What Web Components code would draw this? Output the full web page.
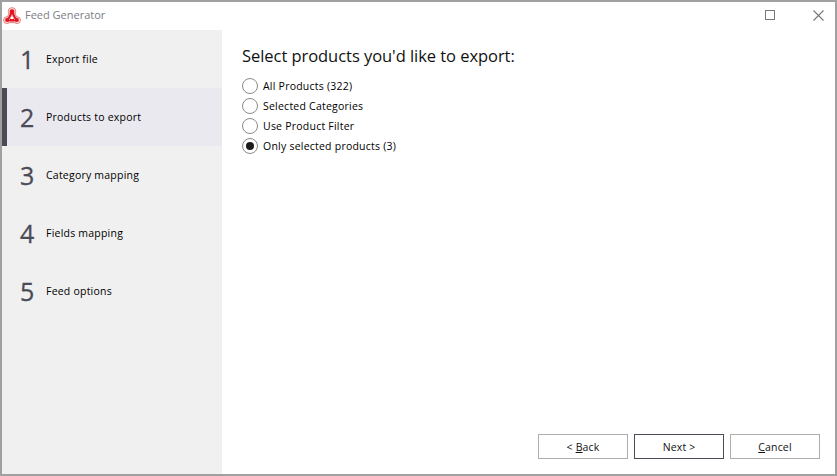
<!DOCTYPE html>
<html>
<head>
<meta charset="utf-8">
<title>Feed Generator</title>
<style>
  html, body { margin: 0; padding: 0; height: 100%; background: #fff; }
  body { font-family: "Open Sans", "Noto Sans", sans-serif; }
</style>
</head>
<body>
<template id="window-tpl">
  <style>
    :host { display: flex; flex-direction: column; box-sizing: border-box; width: 837px; height: 476px; border: 2px solid #a0a0a0; background: #fff; }
    .body { flex: 1; display: flex; min-height: 0; }
    .side { width: 220px; background: #f0f0f0; display: flex; flex-direction: column; }
    .main { flex: 1; display: flex; flex-direction: column; min-width: 0; }
  </style>
  <slot name="title"></slot>
  <div class="body">
    <div class="side"><slot name="side"></slot></div>
    <div class="main"><slot></slot></div>
  </div>
</template>

<template id="title-tpl">
  <style>
    :host { display: flex; align-items: center; height: 28px; background: #fff; color: #7d7d85; font-size: 11px; }
    .logo { width: 18px; height: 18px; margin-left: 1px; margin-right: 4px; flex: none; }
    .text { flex: 1; margin-bottom: 4px; }
    .btn { width: 46px; height: 28px; display: flex; align-items: center; justify-content: center; margin-top: -2px; }
    .btn svg { display: block; }
    .max { margin-right: 2px; }
    .close { margin-right: -6px; }
  </style>
  <svg class="logo" viewBox="0 0 18 18">
    <!-- pale outer outline of the three lobes, red core inside -->
    <g fill="#fbd9d9" stroke="#ec8585" stroke-width="1">
      <circle cx="9" cy="4.4" r="3.8"/>
      <circle cx="3.9" cy="13.2" r="3.4"/>
      <circle cx="14.1" cy="13.2" r="3.4"/>
      <path d="M6.4 6 L3.6 11 L6.2 15.6 H11.8 L14.4 11 L11.6 6 Z"/>
    </g>
    <g fill="#e0141f">
      <circle cx="9" cy="4.6" r="2.3"/>
      <circle cx="4.2" cy="13" r="2.1"/>
      <circle cx="13.8" cy="13" r="2.1"/>
      <path d="M7.2 6 L4.6 11.6 L6.6 14.6 H11.4 L13.4 11.6 L10.8 6 Z"/>
    </g>
    <circle cx="9" cy="10.6" r="1.6" fill="#fff"/>
    <path d="M9 7.6 V9 M6.2 12.4 L7.5 11.5 M11.8 12.4 L10.5 11.5" stroke="#fff" stroke-width="1" fill="none"/>
  </svg>
  <span class="text"><slot></slot></span>
  <div class="btn max"><svg width="10" height="10" viewBox="0 0 10 10"><rect x=".5" y=".5" width="9" height="9" fill="none" stroke="#777"/></svg></div>
  <div class="btn close"><svg width="11" height="11" viewBox="0 0 11 11"><path d="M.5 .5 L10.5 10.5 M10.5 .5 L.5 10.5" fill="none" stroke="#777" stroke-width="1.1"/></svg></div>
</template>

<template id="step-tpl">
  <style>
    :host { display: flex; align-items: center; box-sizing: border-box; height: 58px; color: #000; font-size: 10.5px; letter-spacing: .22px; }
    :host([active]) { background: #e9e9ef; box-shadow: inset 5px 0 0 #4b4b57; }
    .num { width: 44px; box-sizing: border-box; padding-left: 18px; font-size: 25px; -webkit-text-stroke: .3px #4b4b57; letter-spacing: 0; color: #4b4b57; line-height: 1; }
  </style>
  <span class="num"></span>
  <span class="label"><slot></slot></span>
</template>

<template id="radio-tpl">
  <style>
    :host { display: flex; align-items: center; height: 20px; font-size: 10.5px; letter-spacing: .23px; color: #000; }
    .dot { box-sizing: border-box; width: 16px; height: 16px; border-radius: 50%; border: 1px solid #8a8a8a; background: #fff; margin-right: 5px; display: flex; align-items: center; justify-content: center; flex: none; }
    :host([checked]) .dot::after { content: ""; width: 8px; height: 8px; border-radius: 50%; background: #1c1c1c; }
  </style>
  <span class="dot"></span>
  <span><slot></slot></span>
</template>

<template id="page-tpl">
  <style>
    :host { flex: 1; display: flex; flex-direction: column; padding: 14px 15px 15px 20px; min-height: 0; }
    h1 { margin: 0 0 8px; font-size: 16.5px; font-weight: 400; letter-spacing: -.05px; line-height: 24px; color: #111; }
    .list { flex: 1; display: flex; flex-direction: column; }
    .foot { display: flex; justify-content: flex-end; gap: 6px; }
  </style>
  <h1><slot name="heading"></slot></h1>
  <div class="list"><slot></slot></div>
  <div class="foot"><slot name="buttons"></slot></div>
</template>

<template id="button-tpl">
  <style>
    :host { display: flex; align-items: center; justify-content: center; box-sizing: border-box; width: 90px; height: 25px; border: 1px solid #adadad; background: #fff; color: #111; font-size: 10.5px; letter-spacing: .15px; }
    :host([default]) { border-color: #4b4b57; }
    ::slotted(u) { text-underline-offset: 1px; }
  </style>
  <slot></slot>
</template>

<fg-window>
  <fg-title slot="title">Feed Generator</fg-title>
  <fg-step slot="side" num="1">Export file</fg-step>
  <fg-step slot="side" num="2" active>Products to export</fg-step>
  <fg-step slot="side" num="3">Category mapping</fg-step>
  <fg-step slot="side" num="4">Fields mapping</fg-step>
  <fg-step slot="side" num="5">Feed options</fg-step>
  <fg-page>
    <span slot="heading">Select products you'd like to export:</span>
    <fg-radio>All Products (322)</fg-radio>
    <fg-radio>Selected Categories</fg-radio>
    <fg-radio>Use Product Filter</fg-radio>
    <fg-radio checked>Only selected products (3)</fg-radio>
    <fg-button slot="buttons">&lt;&nbsp;<u>B</u>ack</fg-button>
    <fg-button slot="buttons" default>Next &gt;</fg-button>
    <fg-button slot="buttons"><u>C</u>ancel</fg-button>
  </fg-page>
</fg-window>

<script>
// every element just clones its template, so one base class is enough
class FgBase extends HTMLElement {
  constructor(tplId) {
    super();
    this.attachShadow({ mode: 'open' });
    this.shadowRoot.appendChild(document.getElementById(tplId).content.cloneNode(true));
  }
}

class FgWindow extends FgBase { constructor() { super('window-tpl'); } }
class FgTitle extends FgBase { constructor() { super('title-tpl'); } }
class FgRadio extends FgBase { constructor() { super('radio-tpl'); } }
class FgPage extends FgBase { constructor() { super('page-tpl'); } }
class FgButton extends FgBase { constructor() { super('button-tpl'); } }

class FgStep extends FgBase {
  constructor() { super('step-tpl'); }
  connectedCallback() {
    this.shadowRoot.querySelector('.num').textContent = this.getAttribute('num');
  }
}

customElements.define('fg-window', FgWindow);
customElements.define('fg-title', FgTitle);
customElements.define('fg-step', FgStep);
customElements.define('fg-radio', FgRadio);
customElements.define('fg-page', FgPage);
customElements.define('fg-button', FgButton);
</script>
</body>
</html>
